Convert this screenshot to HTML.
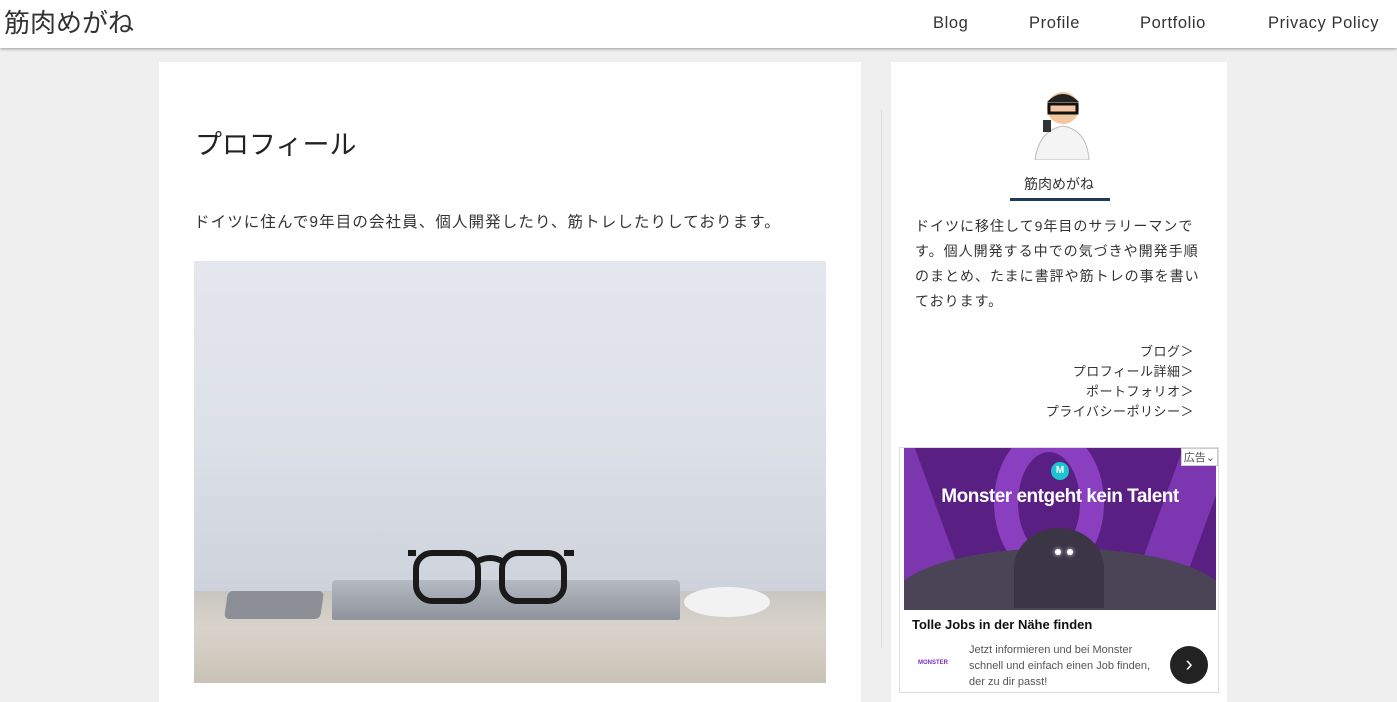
<!DOCTYPE html>
<html><head><meta charset="utf-8"><style>
*{margin:0;padding:0;box-sizing:border-box}
body{width:1397px;height:693px;overflow:hidden;background:#efefef;font-family:"Liberation Sans","Noto Sans CJK JP",sans-serif;color:#333;position:relative}
.hd{position:absolute;left:0;top:0;width:1397px;height:48px;background:#fff;box-shadow:0 1px 3px rgba(0,0,0,.35)}
.logo{position:absolute;left:4px;top:3px;font-size:26px;color:#333}
.nav{position:absolute;top:14px;font-size:16.5px;color:#333;letter-spacing:.6px}
.main{position:absolute;left:159px;top:62px;width:702px;height:640px;background:#fff}
.side{position:absolute;left:891px;top:62px;width:336px;height:640px;background:#fff}
h1{position:absolute;left:36px;top:61px;font-size:27px;font-weight:normal;color:#222}
.lead{position:absolute;left:35px;top:148px;font-size:15.5px;letter-spacing:1.1px;color:#333}
.photo{position:absolute;left:35px;top:199px;width:632px;height:422px;background:linear-gradient(180deg,#e4e7ed 0%,#dde1e8 40%,#cfd4dd 75%,#bfc5cf 100%);overflow:hidden}
.table{position:absolute;left:0;top:330px;width:632px;height:92px;background:linear-gradient(180deg,#c8c6c0,#d9d4cb 40%,#c9c2b6)}
.vline{position:absolute;left:881px;top:110px;width:1px;height:538px;background:#ddd}
.name{position:absolute;left:0;width:336px;top:112px;text-align:center;font-size:14px}
.bar{position:absolute;left:119px;top:136px;width:100px;height:3px;background:#1d3a5c}
.bio{position:absolute;left:24px;top:152px;width:292px;font-size:14px;line-height:25px;letter-spacing:1px}
.links{position:absolute;right:33px;top:280px;text-align:right;font-size:13px;line-height:20px;letter-spacing:.5px}
.ad{position:absolute;left:899px;top:447px;width:320px;height:246px;background:#fff;border:1px solid #ddd}
</style></head><body>
<div class="hd"><div class="logo">筋肉めがね</div>
<div class="nav" style="left:933px">Blog</div><div class="nav" style="left:1029px">Profile</div><div class="nav" style="left:1140px">Portfolio</div><div class="nav" style="left:1268px">Privacy Policy</div></div>
<div class="main"><h1>プロフィール</h1>
<div class="lead">ドイツに住んで9年目の会社員、個人開発したり、筋トレしたりしております。</div>
<div class="photo"><div class="table"></div>
<div style="position:absolute;left:138px;top:319px;width:348px;height:40px;background:linear-gradient(180deg,#b5bac2,#8f949c);border-radius:4px 4px 2px 2px"></div>
<div style="position:absolute;left:32px;top:330px;width:96px;height:28px;background:#8c9096;border-radius:5px;transform:skewX(-8deg)"></div>
<div style="position:absolute;left:490px;top:326px;width:86px;height:30px;background:#f2f2f2;border-radius:50%"></div>
<svg style="position:absolute;left:210px;top:282px" width="175" height="65"><g fill="none" stroke="#1a1a1a" stroke-width="6"><rect x="12" y="10" width="62" height="48" rx="16"/><rect x="98" y="10" width="62" height="48" rx="16"/><path d="M74 18q12-6 24 0M4 10h8M160 10h10"/></g></svg>
</div></div>
<div class="vline"></div>
<div class="side">
<svg style="position:absolute;left:138px;top:26px" width="62" height="72"><circle cx="34" cy="20" r="16" fill="#f1c6a0"/><path d="M18 14q16-16 32 0" fill="#222"/><rect x="20" y="16" width="28" height="9" fill="none" stroke="#111" stroke-width="3"/><path d="M6 72q4-30 28-34q24 4 26 34z" fill="#f4f4f4" stroke="#bbb"/><rect x="14" y="32" width="8" height="12" fill="#333"/></svg>
<div class="name">筋肉めがね</div><div class="bar"></div>
<div class="bio">ドイツに移住して9年目のサラリーマンです。個人開発する中での気づきや開発手順のまとめ、たまに書評や筋トレの事を書いております。</div>
<div class="links">ブログ＞<br>プロフィール詳細＞<br>ポートフォリオ＞<br>プライバシーポリシー＞</div>
</div>
<div class="ad">
<div style="position:absolute;left:4px;top:0;width:312px;height:162px;background:#5a1f82;overflow:hidden">
<div style="position:absolute;left:90px;top:-20px;width:110px;height:150px;border:24px solid #8a3fc0;border-radius:50%"></div>
<div style="position:absolute;left:-20px;top:0;width:60px;height:160px;background:#7b36b0;transform:skewX(20deg)"></div>
<div style="position:absolute;left:250px;top:0;width:50px;height:160px;background:#7b36b0;transform:skewX(-20deg)"></div>
<div style="position:absolute;left:147px;top:14px;width:18px;height:18px;border-radius:50%;background:#1cc4cf;color:#fff;font-size:10px;text-align:center;line-height:18px;font-weight:bold">M</div>
<div style="position:absolute;left:0;width:312px;top:38px;text-align:center;color:#fff;font-weight:bold;font-size:19px;letter-spacing:-.5px">Monster entgeht kein Talent</div>
<div style="position:absolute;left:-10px;top:100px;width:332px;height:100px;background:#4a4456;border-radius:50% 50% 0 0"></div>
<div style="position:absolute;left:110px;top:80px;width:90px;height:80px;background:#3b3545;border-radius:50% 50% 0 0"></div>
<div style="position:absolute;left:151px;top:101px;width:6px;height:6px;border-radius:50%;background:#fff;box-shadow:0 0 4px #fff"></div>
<div style="position:absolute;left:163px;top:101px;width:6px;height:6px;border-radius:50%;background:#fff;box-shadow:0 0 4px #fff"></div>
</div>
<div style="position:absolute;right:0;top:0;border:1px solid #ccc;background:#fff;font-size:11px;padding:0 2px;color:#555">広告⌄</div>
<div style="position:absolute;left:12px;top:169px;font-size:13px;font-weight:bold;color:#111">Tolle Jobs in der Nähe finden</div>
<div style="position:absolute;left:18px;top:212px;font-size:6px;color:#7a2cc0;font-weight:bold">MONSTER</div>
<div style="position:absolute;left:69px;top:194px;font-size:11px;line-height:16px;color:#555">Jetzt informieren und bei Monster<br>schnell und einfach einen Job finden,<br>der zu dir passt!</div>
<div style="position:absolute;left:270px;top:198px;width:38px;height:38px;border-radius:50%;background:#222;color:#fff;font-size:22px;text-align:center;line-height:36px">›</div>
</div>
</body></html>
